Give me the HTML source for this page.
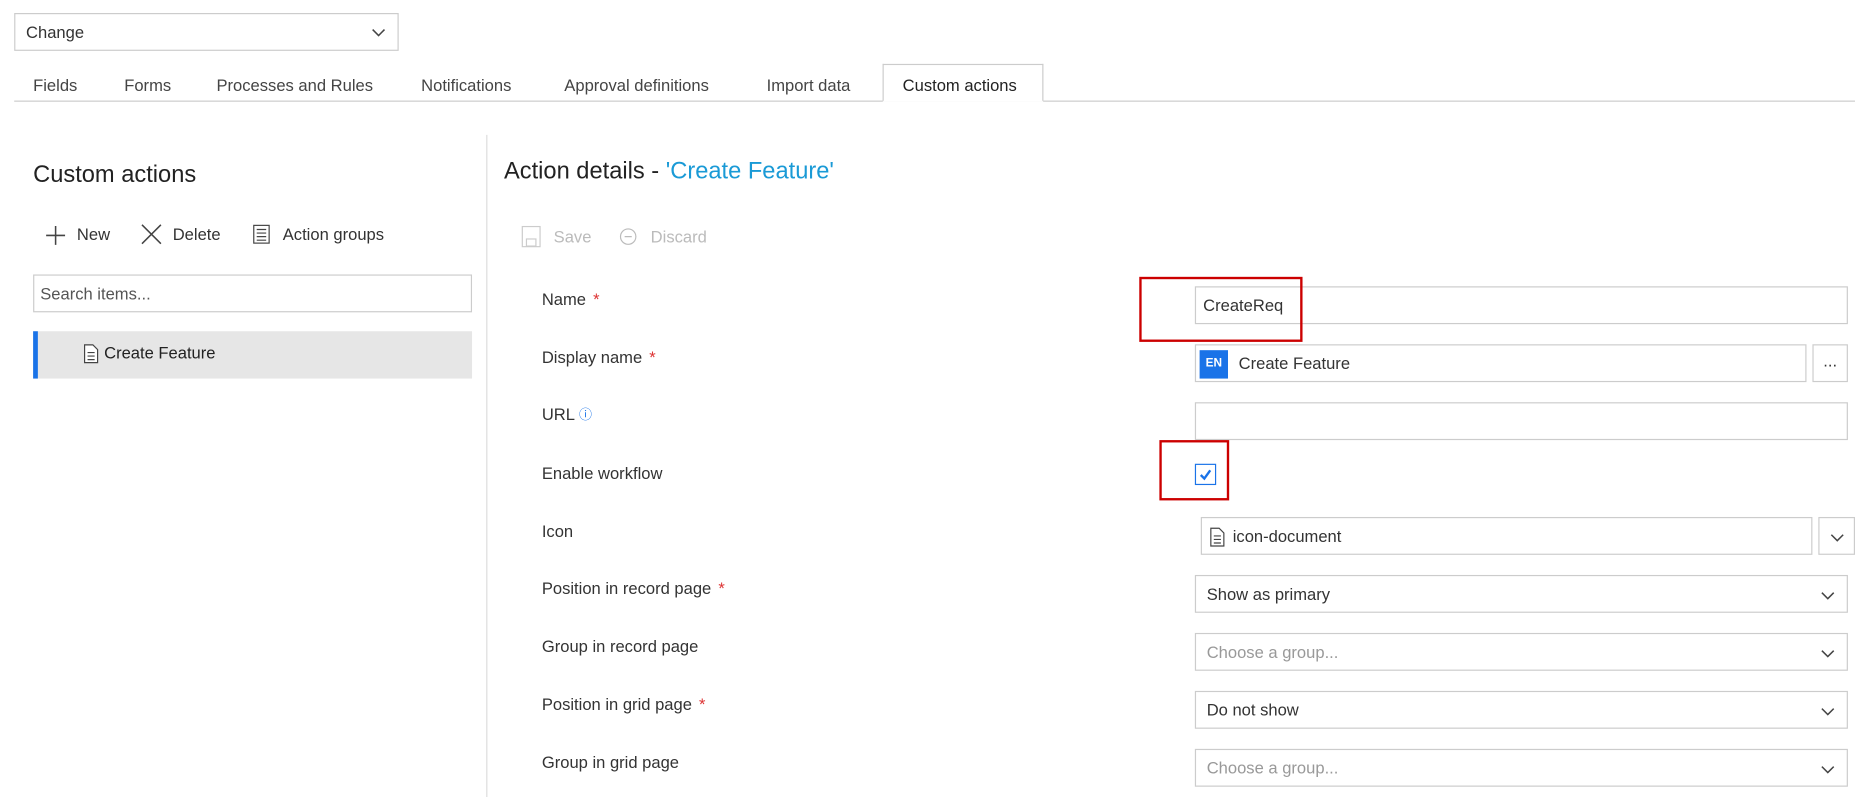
<!DOCTYPE html>
<html><head><style>
body{margin:0;width:1855px;height:785px;overflow:hidden;background:#fff;font-family:"Liberation Sans",sans-serif;color:#333}
#w{position:absolute;left:0;top:0;width:1568px;height:664px;transform:scale(1.18304);transform-origin:0 0}
.a{position:absolute;white-space:nowrap}
.l{font-size:14px;color:#333}
.st{color:#d33;margin-left:6px}
.box{position:absolute;border:1px solid #ccc;background:#fff;box-sizing:border-box;font-size:14px;line-height:30px;padding-left:9px}
.ph{color:#999}
.red{position:absolute;border:2px solid #c00;box-sizing:border-box}
.tab{position:absolute;top:64px;font-size:14px;color:#444}
</style></head><body><div id="w">
<div class="box" style="left:12px;top:11px;width:325px;height:32px;line-height:30px">Change<svg style="position:absolute;right:10px;top:12px" width="12" height="8"><path d="M1 1l5 5 5-5" stroke="#444" fill="none" stroke-width="1.3"/></svg></div>
<div class="a" style="left:12px;top:85px;width:1556px;height:1px;background:#ccc"></div>
<div class="a" style="left:746px;top:54px;width:136px;height:32px;border:1px solid #ccc;border-bottom:1px solid #fff;background:#fff;box-sizing:border-box"></div>
<div class="tab" style="left:28px">Fields</div><div class="tab" style="left:105px">Forms</div><div class="tab" style="left:183px">Processes and Rules</div><div class="tab" style="left:356px">Notifications</div><div class="tab" style="left:477px">Approval definitions</div><div class="tab" style="left:648px">Import data</div><div class="tab" style="left:763px;color:#222">Custom actions</div>
<div class="a" style="left:411px;top:114px;width:1px;height:560px;background:#ddd"></div>
<div class="a" style="left:28px;top:137px;font-size:20px;color:#222">Custom actions</div>
<svg class="a" style="left:38px;top:190px" width="18" height="18"><path d="M9 1v16M1 9h16" stroke="#444" stroke-width="1.3"/></svg>
<div class="a l" style="left:65px;top:190px">New</div>
<svg class="a" style="left:118px;top:188px" width="20" height="20"><path d="M2 2l16 16M18 2L2 18" stroke="#444" stroke-width="1.3"/></svg>
<div class="a l" style="left:146px;top:190px">Delete</div>
<svg class="a" style="left:213px;top:189px" width="16" height="18"><rect x="1.5" y="1.5" width="13" height="15" fill="none" stroke="#444"/><path d="M4 5h8M4 8h8M4 11h8M4 14h8" stroke="#444"/></svg>
<div class="a l" style="left:239px;top:190px">Action groups</div>
<div class="box" style="left:28px;top:232px;width:371px;height:32px;padding-left:5px"><span class="ph" style="color:#555">Search items...</span></div>
<div class="a" style="left:28px;top:280px;width:371px;height:40px;background:#e6e6e6"></div>
<div class="a" style="left:28px;top:280px;width:4px;height:40px;background:#1a73e8"></div>
<svg class="a" style="left:70px;top:290px" width="14" height="18"><path d="M1.5 1.5h7l4 4v11h-11z" fill="#fff" stroke="#444"/><path d="M4 8h6M4 11h6M4 14h6" stroke="#444"/></svg>
<div class="a l" style="left:88px;top:290px;color:#222">Create Feature</div>
<div class="a" style="left:426px;top:134px;font-size:20px;color:#222">Action details - <span style="color:#1a9ad6">'Create Feature'</span></div>
<svg class="a" style="left:440px;top:190px" width="18" height="20"><rect x="1.5" y="1.5" width="15" height="17" fill="none" stroke="#ccc"/><rect x="5" y="12" width="8" height="6" fill="none" stroke="#ccc"/></svg>
<div class="a l" style="left:468px;top:192px;color:#bbb">Save</div>
<svg class="a" style="left:523px;top:192px" width="16" height="16"><circle cx="8" cy="8" r="6.5" fill="none" stroke="#bbb"/><path d="M5 8h6" stroke="#bbb"/></svg>
<div class="a l" style="left:550px;top:192px;color:#bbb">Discard</div>
<div class="a l" style="left:458px;top:245px">Name<span class="st">*</span></div>
<div class="a l" style="left:458px;top:294px">Display name<span class="st">*</span></div>
<div class="a l" style="left:458px;top:342px">URL <span style="color:#1a73e8;font-size:11px;vertical-align:top">ⓘ</span></div>
<div class="a l" style="left:458px;top:392px">Enable workflow</div>
<div class="a l" style="left:458px;top:441px">Icon</div>
<div class="a l" style="left:458px;top:489px">Position in record page<span class="st">*</span></div>
<div class="a l" style="left:458px;top:538px">Group in record page</div>
<div class="a l" style="left:458px;top:587px">Position in grid page<span class="st">*</span></div>
<div class="a l" style="left:458px;top:636px">Group in grid page</div>
<div class="box" style="left:1010px;top:242px;width:552px;height:32px;padding-left:6px">CreateReq</div>
<div class="box" style="left:1010px;top:291px;width:517px;height:32px;padding-left:36px"><span style="position:absolute;left:3px;top:4px;width:24px;height:24px;background:#1a73e8;color:#fff;font-size:10px;font-weight:bold;line-height:24px;text-align:center">EN</span>Create Feature</div>
<div class="box" style="left:1532px;top:291px;width:30px;height:32px;padding:0;text-align:center;line-height:26px">...</div>
<div class="box" style="left:1010px;top:340px;width:552px;height:32px"></div>
<div class="a" style="left:1010px;top:392px;width:18px;height:18px;border:1px solid #1a73e8;box-sizing:border-box;background:#fff"><svg width="16" height="16"><path d="M4 8.5l3 3 5-7" stroke="#1a73e8" stroke-width="2" fill="none"/></svg></div>
<div class="box" style="left:1015px;top:437px;width:517px;height:32px;padding-left:26px"><svg style="position:absolute;left:6px;top:7px" width="14" height="18"><path d="M1.5 1.5h7l4 4v11h-11z" fill="#fff" stroke="#444"/><path d="M4 8h6M4 11h6M4 14h6" stroke="#444"/></svg>icon-document</div>
<div class="box" style="left:1537px;top:437px;width:31px;height:32px;padding:0"><svg style="position:absolute;left:9px;top:13px" width="12" height="8"><path d="M1 1l5 5 5-5" stroke="#444" fill="none" stroke-width="1.3"/></svg></div>
<div class="box" style="left:1010px;top:486px;width:552px;height:32px">Show as primary<svg style="position:absolute;right:10px;top:13px" width="12" height="8"><path d="M1 1l5 5 5-5" stroke="#444" fill="none" stroke-width="1.3"/></svg></div>
<div class="box" style="left:1010px;top:535px;width:552px;height:32px"><span class="ph">Choose a group...</span><svg style="position:absolute;right:10px;top:13px" width="12" height="8"><path d="M1 1l5 5 5-5" stroke="#444" fill="none" stroke-width="1.3"/></svg></div>
<div class="box" style="left:1010px;top:584px;width:552px;height:32px">Do not show<svg style="position:absolute;right:10px;top:13px" width="12" height="8"><path d="M1 1l5 5 5-5" stroke="#444" fill="none" stroke-width="1.3"/></svg></div>
<div class="box" style="left:1010px;top:633px;width:552px;height:32px"><span class="ph">Choose a group...</span><svg style="position:absolute;right:10px;top:13px" width="12" height="8"><path d="M1 1l5 5 5-5" stroke="#444" fill="none" stroke-width="1.3"/></svg></div>
<div class="red" style="left:963px;top:234px;width:138px;height:55px"></div>
<div class="red" style="left:980px;top:372px;width:59px;height:51px"></div>
</div></body></html>
